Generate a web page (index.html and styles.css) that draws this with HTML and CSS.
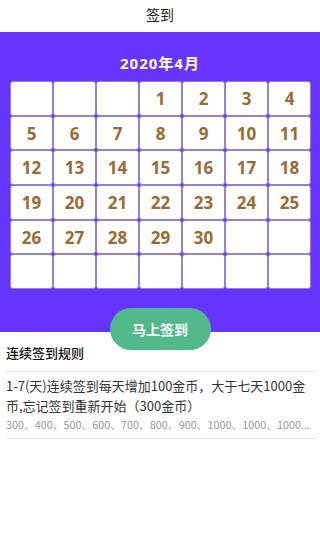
FILE: index.html
```html
<!DOCTYPE html>
<html lang="zh-CN">
<head>
<meta charset="utf-8">
<title>签到</title>
<link rel="stylesheet" href="styles.css">
</head>
<body>
<header class="topbar">签到</header>
<section class="panel">
  <h2 class="month">2020年4月</h2>
  <div class="cal">
    <div class="day"></div><div class="day"></div><div class="day"></div><div class="day">1</div><div class="day">2</div><div class="day">3</div><div class="day">4</div>
    <div class="day">5</div><div class="day">6</div><div class="day">7</div><div class="day">8</div><div class="day">9</div><div class="day">10</div><div class="day">11</div>
    <div class="day">12</div><div class="day">13</div><div class="day">14</div><div class="day">15</div><div class="day">16</div><div class="day">17</div><div class="day">18</div>
    <div class="day">19</div><div class="day">20</div><div class="day">21</div><div class="day">22</div><div class="day">23</div><div class="day">24</div><div class="day">25</div>
    <div class="day">26</div><div class="day">27</div><div class="day">28</div><div class="day">29</div><div class="day">30</div><div class="day"></div><div class="day"></div>
    <div class="day"></div><div class="day"></div><div class="day"></div><div class="day"></div><div class="day"></div><div class="day"></div><div class="day"></div>
  </div>
  <button class="signbtn">马上签到</button>
</section>
<section class="rules">
  <h3 class="rules-title">连续签到规则</h3>
  <div class="rule">
    <p class="rule-text">1-7(天)连续签到每天增加100金币，大于七天1000金币,忘记签到重新开始（300金币）</p>
    <p class="rule-sub">300、400、500、600、700、800、900、1000、1000、1000...</p>
  </div>
</section>
</body>
</html>
```
FILE: styles.css
```css
html, body {
  margin: 0;
  padding: 0;
  background: #fff;
}
body {
  width: 320px;
  font-family: "Noto Sans CJK SC", "Open Sans", sans-serif;
  color: #222;
}
.topbar {
  height: 32px;
  line-height: 29px;
  text-align: center;
  font-size: 14px;
  color: #222;
}
.panel {
  background: #6633ff;
  height: 300px;
  display: flex;
  flex-direction: column;
  align-items: center;
}
.month {
  margin: 21px 0 8px;
  height: 20px;
  line-height: 20px;
  font-size: 15px;
  font-weight: bold;
  color: #fff;
  letter-spacing: 1px;
  font-family: "Open Sans", "Noto Sans CJK SC", sans-serif;
}
.cal {
  width: 301px;
  display: grid;
  grid-template-columns: repeat(7, 1fr);
  grid-auto-rows: 34.7px;
  align-self: flex-start;
  margin-left: 10px;
}
.day {
  background: #fff;
  border: 1px solid #9484cc;
  border-radius: 3px;
  display: flex;
  align-items: center;
  justify-content: center;
  font-family: "Open Sans", "Noto Sans CJK SC", sans-serif;
  font-weight: bold;
  font-size: 17px;
  color: #9c6a33;
}
.signbtn {
  margin-top: 19px;
  width: 101px;
  height: 42px;
  border: none;
  border-radius: 21px;
  background: #52b98a;
  color: #fff;
  font-family: "Noto Sans CJK SC", sans-serif;
  font-weight: bold;
  font-size: 14px;
  padding: 0;
  flex-shrink: 0;
  position: relative;
  z-index: 1;
}
.rules {
  padding: 0 4px 0 6px;
}
.rules-title {
  margin: 0;
  padding: 11px 0 8px;
  line-height: 20px;
  font-size: 13px;
  font-weight: 500;
  color: #111;
  border-bottom: 1px solid #e6e6e6;
}
.rule {
  padding: 4px 0 6px;
  border-bottom: 1px solid #e6e6e6;
}
.rule-text {
  margin: 0;
  font-size: 13px;
  line-height: 20px;
  color: #333;
}
.rule-sub {
  margin: 0;
  font-size: 10.8px;
  line-height: 16px;
  color: #999;
  white-space: nowrap;
}
```
